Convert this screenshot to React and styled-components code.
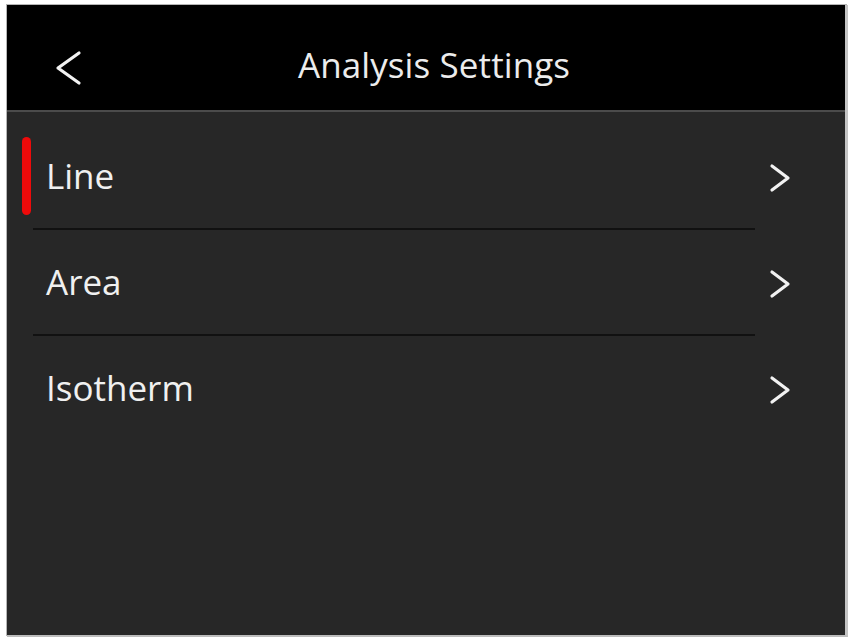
import React, { useState } from 'react';
import styled, { createGlobalStyle } from 'styled-components';

const GlobalStyle = createGlobalStyle`
  html, body {
    margin: 0;
    padding: 0;
    background: #ffffff;
    font-family: "Open Sans", "Noto Sans", "DejaVu Sans", sans-serif;
  }
`;

const items = [
  { id: 'line', label: 'Line' },
  { id: 'area', label: 'Area' },
  { id: 'isotherm', label: 'Isotherm' },
];

const ChevronLeft = () => (
  <svg width="28" height="36" viewBox="0 0 28 36" fill="none">
    <path d="M25 3 L4 18 L25 33" stroke="#f2f2f2" strokeWidth="3.2" strokeLinecap="round" strokeLinejoin="round" />
  </svg>
);

const ChevronRight = () => (
  <svg width="24" height="30" viewBox="0 0 24 30" fill="none">
    <path d="M4 3 L20 15 L4 27" stroke="#f2f2f2" strokeWidth="3.2" strokeLinecap="round" strokeLinejoin="round" />
  </svg>
);

const App = () => {
  const [selected, setSelected] = useState('line');

  return (
    <>
      <GlobalStyle />
      <Screen>
        <Header>
          <BackButton>
            <ChevronLeft />
          </BackButton>
          <Title>Analysis Settings</Title>
        </Header>
        <List>
          {items.map((item, index) => (
            <React.Fragment key={item.id}>
              <Row onClick={() => setSelected(item.id)}>
                <Marker active={selected === item.id} />
                <Label>{item.label}</Label>
                <Arrow>
                  <ChevronRight />
                </Arrow>
              </Row>
              {index < items.length - 1 && <Divider />}
            </React.Fragment>
          ))}
        </List>
      </Screen>
    </>
  );
};

export default App;

const Screen = styled.div`
  display: flex;
  flex-direction: column;
  width: 838px;
  height: 630px;
  margin: 5px 0 0 7px;
  background: #272727;
  border-right: 3px solid #c4c4c4;
  border-bottom: 2px solid #bdbdbd;
  box-shadow: -1px -1px 0 #b5b5b5;
  overflow: hidden;
`;

const Header = styled.div`
  position: relative;
  display: flex;
  align-items: center;
  justify-content: center;
  height: 107px;
  box-sizing: border-box;
  padding-top: 14px;
  background: #000000;
  border-bottom: 2px solid #4b4b4b;
  flex-shrink: 0;
`;

const BackButton = styled.div`
  position: absolute;
  left: 47px;
  top: 45px;
  display: flex;
  cursor: pointer;
`;

const Title = styled.div`
  color: #ececec;
  font-size: 35px;
  line-height: 40px;
  font-weight: 400;
  padding-left: 16px;
  letter-spacing: 0.1px;
`;

const List = styled.div`
  display: flex;
  flex-direction: column;
  padding-top: 12px;
`;

const Row = styled.div`
  display: flex;
  align-items: center;
  height: 104px;
  padding-left: 15px;
  cursor: pointer;
`;

const Marker = styled.div`
  width: 9px;
  height: 78px;
  border-radius: 5px;
  background: ${({ active }) => (active ? '#ee0a0a' : 'transparent')};
`;

const Label = styled.div`
  flex: 1;
  margin-left: 15px;
  color: #f0f0f0;
  font-size: 35px;
  line-height: 40px;
`;

const Arrow = styled.div`
  display: flex;
  margin-right: 53px;
  padding-top: 4px;
`;

const Divider = styled.div`
  height: 2px;
  margin: 0 90px 0 26px;
  background: #111111;
`;
